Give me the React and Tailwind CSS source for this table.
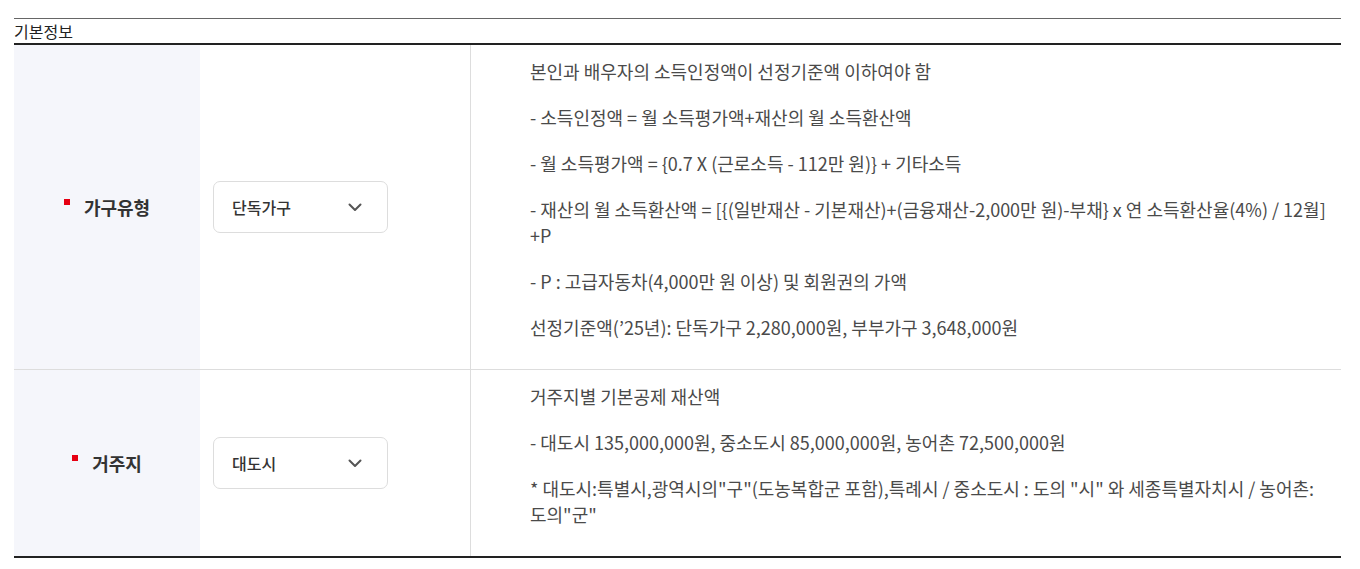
import React from 'react';

const fonte = { fontFamily: '"Noto Sans CJK KR", "Noto Sans", sans-serif' };

function Seta() {
  return (
    <svg width="14" height="9" viewBox="0 0 14 9" fill="none" className="shrink-0">
      <path d="M1.5 1.5l5.5 5.5 5.5-5.5" stroke="#555" strokeWidth="2" strokeLinecap="round" strokeLinejoin="round" />
    </svg>
  );
}

function Rotulo({ texto }) {
  return (
    <div className="bg-[#f5f6fb] flex items-center justify-center">
      <span className="relative w-[6px] h-[6px] bg-[#e60012] -mt-[11px] mr-[14px]" />
      <span className="text-[18px] font-bold text-[#333] leading-[26px]">{texto}</span>
    </div>
  );
}

function Seletor({ valor }) {
  return (
    <div className="flex items-center pl-[13px] border-r border-[#dddddd]">
      <div className="w-[175px] h-[52px] border border-[#dddddd] rounded-[7px] bg-white flex items-center justify-between pl-[18px] pr-[25px]">
        <span className="text-[16px] font-medium text-[#333]">{valor}</span>
        <Seta />
      </div>
    </div>
  );
}

function Conteudo({ linhas }) {
  return (
    <div className="pl-[59px] pr-[4px] pt-[13px] pb-[9px] text-[18px] leading-[26px] text-[#4a4a4a]">
      {linhas.map((l, i) => (
        <p key={i} className="mb-[20px]">{l}</p>
      ))}
    </div>
  );
}

export default function App() {
  const linhasTipo = [
    '본인과 배우자의 소득인정액이 선정기준액 이하여야 함',
    '- 소득인정액 = 월 소득평가액+재산의 월 소득환산액',
    '- 월 소득평가액 = {0.7 X (근로소득 - 112만 원)} + 기타소득',
    <>- 재산의 월 소득환산액 = [{'{'}(일반재산 - 기본재산)+(금융재산-2,000만 원)-부채{'}'} x 연 소득환산율(4%) / 12월]<br />+P</>,
    '- P : 고급자동차(4,000만 원 이상) 및 회원권의 가액',
    '선정기준액(’25년): 단독가구 2,280,000원, 부부가구 3,648,000원',
  ];
  const linhasLocal = [
    '거주지별 기본공제 재산액',
    '- 대도시 135,000,000원, 중소도시 85,000,000원, 농어촌 72,500,000원',
    <>* 대도시:특별시,광역시의"구"(도농복합군 포함),특례시 / 중소도시 : 도의 "시" 와 세종특별자치시 / 농어촌:<br />도의"군"</>,
  ];

  return (
    <div className="bg-white min-h-[569px] pt-[18px]" style={fonte}>
      <div className="ml-[14px] w-[1327px]">
        <div className="border-t border-[#666] border-b-2 border-b-[#222] h-[27px] flex items-center">
          <span className="text-[16px] text-[#222] leading-[24px]">기본정보</span>
        </div>
        <div className="grid grid-cols-[186px_271px_1fr] border-b border-[#dddddd]">
          <Rotulo texto="가구유형" />
          <Seletor valor="단독가구" />
          <Conteudo linhas={linhasTipo} />
        </div>
        <div className="grid grid-cols-[186px_271px_1fr] border-b-2 border-[#222]">
          <Rotulo texto="거주지" />
          <Seletor valor="대도시" />
          <Conteudo linhas={linhasLocal} />
        </div>
      </div>
    </div>
  );
}
